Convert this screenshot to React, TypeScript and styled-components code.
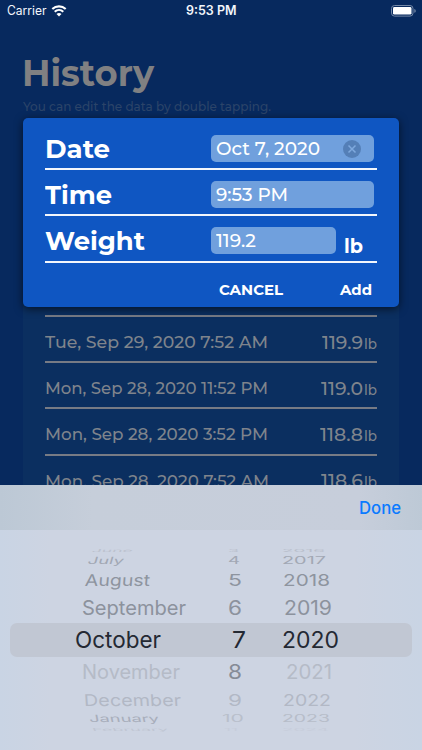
import React, { useLayoutEffect, useRef, useState } from "react";
import styled, { createGlobalStyle } from "styled-components";

const GlobalStyle = createGlobalStyle`
  * { box-sizing: border-box; }
  html, body { margin: 0; padding: 0; background: #07295e; }
  body { font-family: Montserrat, Inter, "Liberation Sans", sans-serif; overflow: hidden; }
`;

/* Text stretched horizontally to an exact advance width */
const FitBox = styled.span<{ $w: number }>`
  display: block;
  flex: none;
  width: ${(p) => p.$w}px;
  white-space: nowrap;
`;
const FitInner = styled.span`
  display: inline-block;
  transform-origin: 0 50%;
  vertical-align: top;
`;

function Fit({ w, sy = 1, skew = 0, children }: { w: number; sy?: number; skew?: number; children: string }) {
  const ref = useRef<HTMLSpanElement>(null);
  const [sx, setSx] = useState(1);
  useLayoutEffect(() => {
    if (ref.current && ref.current.offsetWidth) setSx(w / parseFloat(getComputedStyle(ref.current).width));
  }, [w, children]);
  return (
    <FitBox $w={w}>
      <FitInner ref={ref} style={{ transform: `scale(${sx}, ${sy}) skewX(${skew}deg)` }}>
        {children}
      </FitInner>
    </FitBox>
  );
}

const Screen = styled.div`
  position: relative;
  width: 422px;
  height: 750px;
  overflow: hidden;
  background: #07295e;
`;

const StatusBar = styled.header`
  display: grid;
  grid-template-columns: 1fr auto 1fr;
  align-items: center;
  height: 22px;
  padding: 0 5px 0 7px;
  color: #f3f6fb;
  font: 400 12.5px/22px Inter, sans-serif;
`;
const Carrier = styled.div`
  display: flex;
  align-items: center;
  gap: 4px;
`;
const Clock = styled.div`
  font-weight: 600;
  padding-right: 2px;
`;
const Battery = styled.svg`
  justify-self: end;
  display: block;
`;

const Page = styled.main`
  padding: 28px 23px 0;
`;
const Title = styled.h1`
  margin: 0 0 0 -1px;
  height: 46px;
  font-size: 36px;
  line-height: 46px;
  font-weight: 700;
  color: #808082;
`;
const Hint = styled.p`
  margin: 0;
  height: 20px;
  font-size: 12.5px;
  line-height: 21px;
  font-weight: 500;
  color: #2b4469;
`;
const History = styled.section`
  margin-top: 12px;
  padding: 187px 22px 0;
  height: 500px;
  background: #0b2f60;
`;
const Entry = styled.div`
  display: flex;
  justify-content: space-between;
  align-items: center;
  height: 46.2px;
  padding-top: 6px;
  border-top: 2px solid #777b85;
  color: #7f848c;
  font-size: 17px;
  line-height: 24px;
  font-weight: 500;
`;
const Reading = styled.div`
  display: flex;
  align-items: baseline;
  gap: 1px;
  padding-top: 2px;
  font-size: 18.3px;
`;
const Unit = styled.span`
  font-size: 14px;
`;

const Dialog = styled.section`
  position: absolute;
  left: 23px;
  top: 118px;
  width: 376px;
  height: 189px;
  padding: 6px 22px 0;
  border-radius: 5px;
  background: #0f56c2;
  box-shadow: 0 2px 9px rgba(0, 0, 0, 0.6);
  color: #fff;
`;
const Field = styled.label`
  display: flex;
  align-items: center;
  height: 46.2px;
  border-bottom: 2px solid #f2f6fc;
`;
const FieldName = styled.span`
  width: 166.4px;
  font-size: 26.3px;
  line-height: 32px;
  font-weight: 700;
  padding-top: 5px;
`;
const Input = styled.span<{ $w: number }>`
  display: flex;
  align-items: center;
  justify-content: space-between;
  width: ${(p) => p.$w}px;
  height: 27px;
  margin-top: 5px;
  padding: 0 13.5px 0 5px;
  border-radius: 5px;
  background: #70a0dd;
  font-size: 18.3px;
  font-weight: 500;
  line-height: 27px;
`;
const Suffix = styled.span`
  margin: 17px 0 0 8px;
  font-size: 19px;
  line-height: 24px;
  font-weight: 700;
`;
const Actions = styled.div`
  display: flex;
  justify-content: flex-end;
  gap: 58px;
  padding: 17px 5px 0 0;
`;
const Action = styled.button`
  border: 0;
  padding: 0;
  background: none;
  color: #fff;
  font: 700 14.5px/20px Montserrat, Inter, sans-serif;
`;

const Sheet = styled.section`
  position: absolute;
  left: 0;
  right: 0;
  bottom: 0;
  height: 265px;
  font-family: Inter, sans-serif;
  background: linear-gradient(90deg, #c9d4e4, #cdd4e2 12%, #cdd4e2 84%, #c9d4e4);
`;
const Toolbar = styled.div`
  display: flex;
  justify-content: flex-end;
  height: 45px;
  padding: 0 21px;
  background: linear-gradient(90deg, #bcc8d5, #c6ceda 22%, #c7cedb 85%, #bdc9d6);
`;
const Done = styled.button`
  border: 0;
  padding: 0;
  background: none;
  color: #0a7aff;
  font: 500 17px/46px Inter, sans-serif;
`;
const Wheels = styled.div`
  padding-top: 17px;
`;
const WheelRow = styled.div<{ $h: number; $size: number; $active?: boolean }>`
  display: grid;
  grid-template-columns: 212px 60px 1fr;
  align-items: center;
  height: ${(p) => p.$h}px;
  margin: ${(p) => (p.$active ? "-1px 10px" : "0 10px")};
  padding-bottom: ${(p) => (p.$active ? 1 : 0)}px;
  ${(p) => p.$active && "height: 34px; border-radius: 7px; background: #c1c7d3;"}
  font-size: ${(p) => p.$size}px;
  line-height: ${(p) => p.$h}px;
`;
const Cell = styled.div<{ $x: number; $c: string }>`
  padding-left: ${(p) => p.$x}px;
  color: ${(p) => p.$c};
`;

type Item = [string, number, number, string];
type Wheel = { h: number; sy: number; size?: number; skew: number; active?: boolean; m: Item; d: Item; y: Item };

/* Each item holds its label, left edge, width and colour */
const wheelRows: Wheel[] = [
  { h: 7, sy: 0.2, skew: -6, m: ["June", 92, 41, "#bcc2ce"], d: ["3", 228, 11, "#b8becb"], y: ["2016", 280, 43, "#b8becb"] },
  { h: 14, sy: 0.48, skew: -9, m: ["July", 88, 36, "#a2a8b4"], d: ["4", 228, 12, "#a2a8b4"], y: ["2017", 282, 44, "#a2a8b4"] },
  { h: 24, sy: 0.79, skew: -4, m: ["August", 85, 65, "#8e949f"], d: ["5", 228, 14, "#8e949f"], y: ["2018", 283, 47, "#8e949f"] },
  { h: 32, sy: 0.96, skew: 0, m: ["September", 82, 104, "#8c929d"], d: ["6", 228, 14, "#8c929d"], y: ["2019", 284, 48, "#8c929d"] },
  { h: 32, sy: 1, size: 23, skew: 0, active: true, m: ["October", 75, 86, "#242933"], d: ["7", 231.5, 14, "#242933"], y: ["2020", 280.5, 57, "#242933"] },
  { h: 32, sy: 0.96, skew: 0, m: ["November", 82, 98, "#b5bbc7"], d: ["8", 228, 14, "#858b96"], y: ["2021", 286, 46, "#b5bbc7"] },
  { h: 24, sy: 0.79, skew: 3, m: ["December", 84, 97, "#b2b8c5"], d: ["9", 228, 14, "#b2b8c5"], y: ["2022", 283, 48, "#b2b8c5"] },
  { h: 14, sy: 0.48, skew: 6, m: ["January", 89, 70, "#a8aebb"], d: ["10", 219, 22, "#b9bfcb"], y: ["2023", 281, 48, "#b7bdc9"] },
  { h: 7, sy: 0.2, skew: 6, m: ["February", 92, 76, "#c0c6d3"], d: ["11", 224, 14, "#c7cddb"], y: ["2024", 280, 47, "#c7cddb"] },
];

const columnStarts = [10, 222, 282];

const entries: [string, number, string, number][] = [
  ["Tue, Sep 29, 2020 7:52 AM", 223, "119.9", 41],
  ["Mon, Sep 28, 2020 11:52 PM", 223, "119.0", 42],
  ["Mon, Sep 28, 2020 3:52 PM", 223, "118.8", 43],
  ["Mon, Sep 28, 2020 7:52 AM", 224, "118.6", 42],
];

export default function App() {
  return (
    <>
      <GlobalStyle />
      <Screen>
        <StatusBar>
          <Carrier>
            <Fit w={39.5}>Carrier</Fit>
            <svg width="16" height="12" viewBox="0 0 15 12" fill="none" stroke="#fff">
              <path d="M.8 4.1C4.6.5 10.4.5 14.2 4.1" strokeWidth="2.1" />
              <path d="M3.2 6.7C5.7 4.4 9.3 4.4 11.8 6.7" strokeWidth="2" />
              <path d="M5 8.9C6.4 7.7 8.6 7.7 10 8.9L7.5 11.4Z" fill="#fff" stroke="none" />
            </svg>
          </Carrier>
          <Clock><Fit w={50.5}>9:53 PM</Fit></Clock>
          <Battery width="26" height="12" viewBox="0 0 26 12">
            <rect x=".5" y=".5" width="21.5" height="10.6" rx="3" fill="none" stroke="#7488a7" />
            <rect x="2" y="2" width="18.5" height="7.6" rx="1.4" fill="#fff" />
            <path d="M23.3 4v3.8c1-.3 1.4-1 1.4-1.9s-.4-1.6-1.4-1.9Z" fill="#7488a7" />
          </Battery>
        </StatusBar>
        <Page>
          <Title><Fit w={132}>History</Fit></Title>
          <Hint><Fit w={248}>You can edit the data by double tapping.</Fit></Hint>
          <History>
            {entries.map(([date, dw, value, vw]) => (
              <Entry key={date}>
                <Fit w={dw}>{date}</Fit>
                <Reading>
                  <Fit w={vw}>{value}</Fit>
                  <Unit><Fit w={13}>lb</Fit></Unit>
                </Reading>
              </Entry>
            ))}
          </History>
        </Page>

        <Dialog>
          <Field>
            <FieldName><Fit w={65}>Date</Fit></FieldName>
            <Input $w={163}>
              <Fit w={104}>Oct 7, 2020</Fit>
              <svg width="18" height="18" viewBox="0 0 18 18">
                <circle cx="9" cy="9" r="9" fill="#547fb7" />
                <path d="M5.5 5.5l7 7M12.5 5.5l-7 7" stroke="#7fa9de" strokeWidth="1.5" />
              </svg>
            </Input>
          </Field>
          <Field>
            <FieldName><Fit w={67}>Time</Fit></FieldName>
            <Input $w={163}><Fit w={72}>9:53 PM</Fit></Input>
          </Field>
          <Field>
            <FieldName><Fit w={100}>Weight</Fit></FieldName>
            <Input $w={124.5}><Fit w={40}>119.2</Fit></Input>
            <Suffix><Fit w={19}>lb</Fit></Suffix>
          </Field>
          <Actions>
            <Action><Fit w={64}>CANCEL</Fit></Action>
            <Action><Fit w={32}>Add</Fit></Action>
          </Actions>
        </Dialog>

        <Sheet>
          <Toolbar><Done><Fit w={42}>Done</Fit></Done></Toolbar>
          <Wheels>
            {wheelRows.map((r) => (
              <WheelRow key={r.m[0]} $h={r.h} $size={r.size ?? 20.5} $active={r.active}>
                {[r.m, r.d, r.y].map(([label, x, w, c], i) => (
                  <Cell key={label} $x={x - columnStarts[i]} $c={c}>
                    <Fit w={w} sy={r.sy} skew={i === 0 ? r.skew : 0}>{label}</Fit>
                  </Cell>
                ))}
              </WheelRow>
            ))}
          </Wheels>
        </Sheet>
      </Screen>
    </>
  );
}
